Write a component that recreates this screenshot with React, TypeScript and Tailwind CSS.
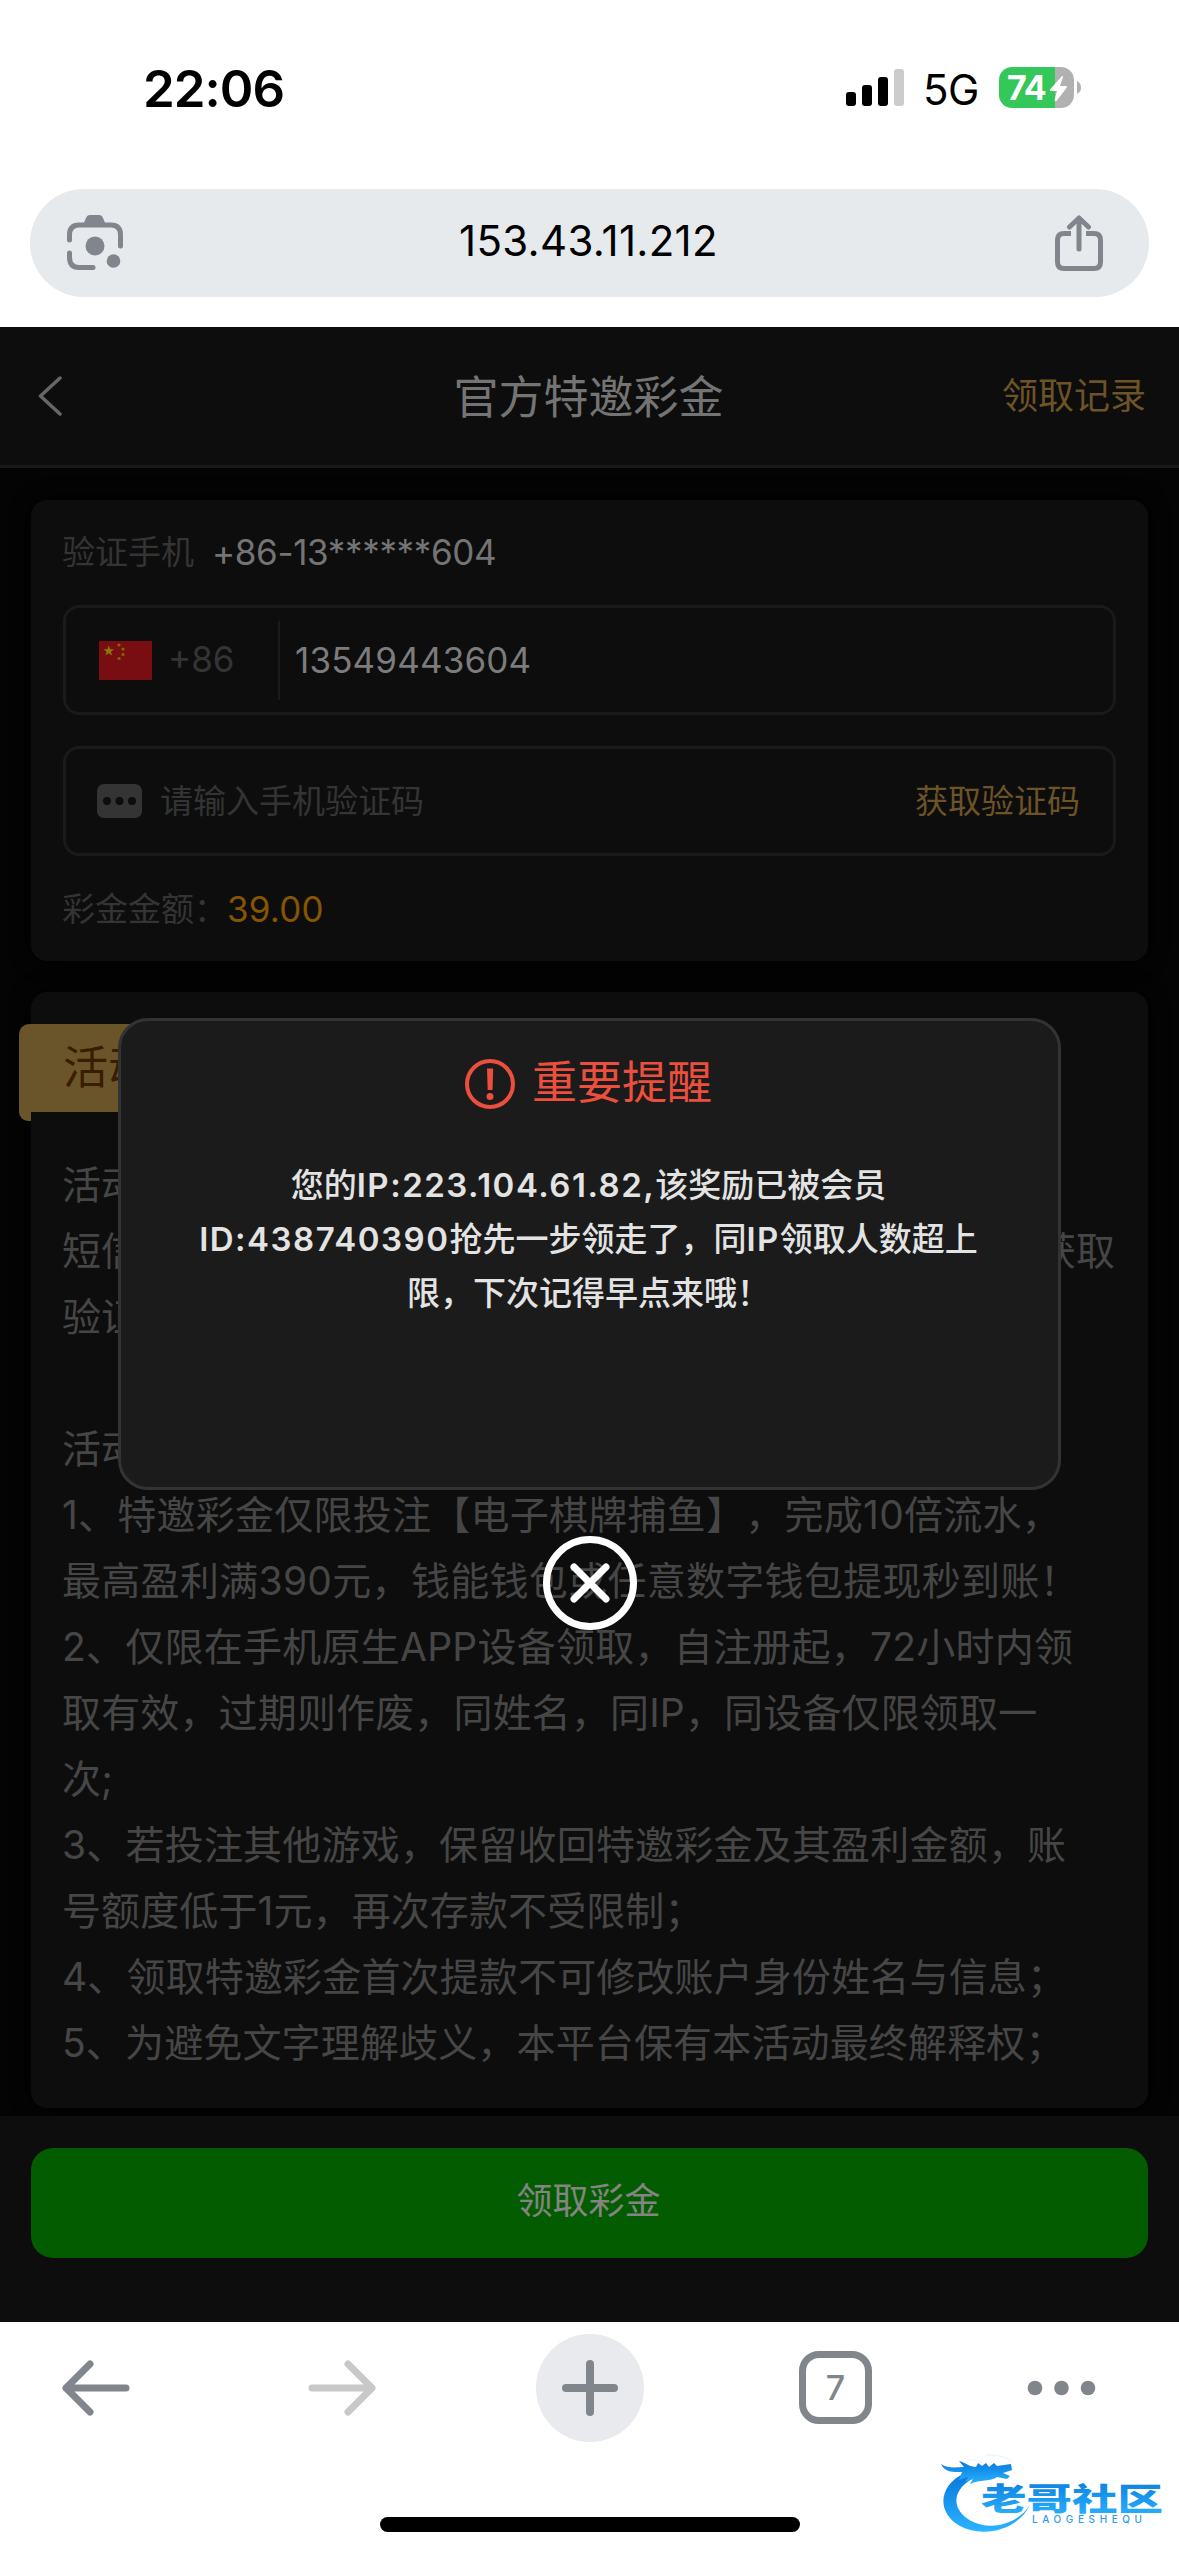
import type { ReactNode } from "react";

const rules = [
  { text: "1、特邀彩金仅限投注【电子棋牌捕鱼】，完成10倍流水，", tracking: "tracking-[0.25px]" },
  { text: "最高盈利满390元，钱能钱包或任意数字钱包提现秒到账！", tracking: "tracking-[0.3px]" },
  { text: "2、仅限在手机原生APP设备领取，自注册起，72小时内领", tracking: "tracking-[0.25px]" },
  { text: "取有效，过期则作废，同姓名，同IP，同设备仅限领取一", tracking: "tracking-[0.15px]" },
  { text: "次;", tracking: "tracking-[0.1px]" },
  { text: "3、若投注其他游戏，保留收回特邀彩金及其盈利金额，账", tracking: "tracking-[0.2px]" },
  { text: "号额度低于1元，再次存款不受限制；", tracking: "tracking-[0.1px]" },
  { text: "4、领取特邀彩金首次提款不可修改账户身份姓名与信息；", tracking: "tracking-[0.15px]" },
  { text: "5、为避免文字理解歧义，本平台保有本活动最终解释权；", tracking: "tracking-[0.15px]" },
];

export default function App() {
  return (
    <div className="relative flex h-[2556px] w-[1179px] flex-col overflow-hidden bg-white font-['Inter','Noto_Sans_CJK_SC',sans-serif] [text-spacing-trim:space-all]">
      <StatusBar />
      <AddressBar />
      <main className="flex h-[1995px] flex-col bg-[#040404]">
        <PageHeader />
        <VerifyCard />
        <RulesCard />
        <ClaimBar />
      </main>
      <BrowserToolbar />
      <ReminderDialog />
      <Watermark />
    </div>
  );
}

function StatusBar() {
  return (
    <div className="flex h-[189px] items-start justify-between pl-[143px] pr-[98px] text-black">
      <span className="mt-[59px] text-[51px] font-semibold leading-[60px] tracking-[-1px]">
        22:06
      </span>
      <div className="mt-[67px] flex items-start">
        <svg className="mt-[2px] h-[37px] w-[58px]" viewBox="0 0 58 37">
          <rect x="0" y="23" width="10" height="14" rx="3" />
          <rect x="16" y="16" width="10" height="21" rx="3" />
          <rect x="32" y="8" width="10" height="29" rx="3" />
          <rect x="48" y="0" width="10" height="37" rx="3" fill="#cccccc" />
        </svg>
        <span className="ml-[19px] mt-[-2px] w-[76px] text-[42px] leading-[50px] tracking-[-0.5px]">
          5G
        </span>
        <div className="relative flex h-[41px] w-[75px] items-center overflow-hidden rounded-[13px] bg-[linear-gradient(90deg,#34c759_56px,#b1b1b1_56px)]">
          <span className="pl-[8px] text-[34px] font-bold leading-[41px] tracking-[-1px] text-white">
            74
          </span>
          <svg
            className="absolute left-[51px] top-[9px] h-[26px] w-[17px]"
            viewBox="0 0 17 26"
            fill="#fff"
          >
            <path d="M12 0 L0 13.5 Q-.5 15 1 15 H7 L4.5 24 Q5 26 6.500 25 L16.500 12 Q17.500 10 16 10 H10 L13 1 Q13 0 12 0Z" />
          </svg>
        </div>
        <svg className="ml-[3px] mt-[14px] h-[13px] w-[4px]" viewBox="0 0 4 13">
          <path d="M0 0 Q4 2 4 6.500 T0 13Z" fill="#b1b1b1" />
        </svg>
      </div>
    </div>
  );
}

function AddressBar() {
  return (
    <div className="h-[138px] px-[30px]">
      <div className="flex h-[108px] items-center justify-between rounded-[54px] bg-[#e6eaed] pl-[37px] pr-[45px]">
        <svg
          className="h-[56px] w-[56px]"
          viewBox="0 0 56 56"
          fill="none"
          stroke="#80868b"
          strokeWidth="5"
        >
          <path d="M2.500 25 V20 Q2.500 10 12 10 H44 Q53.500 10 53.500 20 V31" strokeLinecap="round" />
          <path d="M2.500 38 V42 Q2.500 52.500 12 52.500 H26" strokeLinecap="round" />
          <path d="M16 10 L19 3 Q20 0 23 0 H32 Q35 0 36 3 L39 10Z" fill="#80868b" stroke="none" />
          <circle cx="28" cy="31" r="9.500" fill="#80868b" stroke="none" />
          <circle cx="46.500" cy="46" r="6.800" fill="#80868b" stroke="none" />
        </svg>
        <span className="mb-[5px] text-[42px] leading-[50px] tracking-[0.3px] text-black">
          153.43.11.212
        </span>
        <svg
          className="h-[56px] w-[50px]"
          viewBox="0 0 50 56"
          fill="none"
          stroke="#80868b"
          strokeWidth="5"
        >
          <path d="M17 18.500 H10 Q3.500 18.500 3.500 25 V47 Q3.500 53.500 10 53.500 H40 Q46.500 53.500 46.500 47 V25 Q46.500 18.500 40 18.500 H32" />
          <path d="M25 3 V34 M15.500 12 L25 3 L34.500 12" strokeLinecap="round" strokeLinejoin="round" />
        </svg>
      </div>
    </div>
  );
}

function PageHeader() {
  return (
    <header className="flex h-[141px] shrink-0 items-center justify-between border-b-[3px] border-[#1a1a1a] bg-[#0d0d0d] pl-[37px] pr-[33px]">
      <div className="w-[140px]">
        <svg className="h-[40px] w-[26px]" viewBox="0 0 26 40" fill="none" stroke="#666" strokeWidth="3.500">
          <path d="M23 2 L3.500 20 L23 38" strokeLinecap="round" strokeLinejoin="round" />
        </svg>
      </div>
      <h1 className="pt-[4px] text-[45px] leading-[60px] text-[#747474]">官方特邀彩金</h1>
      <span className="w-[146px] text-right text-[36px] leading-[50px] text-[#6c5426]">
        领取记录
      </span>
    </header>
  );
}

function Field({ children }: { children: ReactNode }) {
  return (
    <div className="flex h-[110px] items-center rounded-[16px] border-[3px] border-[#1a1a1a] px-[31px]">
      {children}
    </div>
  );
}

function VerifyCard() {
  return (
    <section className="mx-[31px] mt-[32px] h-[461px] shrink-0 rounded-[16px] bg-[#0d0d0d] px-[32px] shadow-[0_0_20px_#000]">
      <div className="-ml-px flex h-[105px] items-center pb-[2px] text-[33px] leading-[50px]">
        <span className="text-[#343434]">验证手机</span>
        <span className="ml-[18px] text-[35px] tracking-[-0.35px] text-[#747474]">+86-13******604</span>
      </div>
      <Field>
        <div className="ml-[2px]">
          <ChinaFlag />
        </div>
        <span className="ml-[16px] w-[110px] pb-[1px] text-[35px] text-[#343434]">+86</span>
        <span className="h-[79px] w-[2px] bg-[#1a1a1a]" />
        <span className="ml-[15px] text-[35px] tracking-[0.15px] text-[#7c7c7c]">13549443604</span>
      </Field>
      <div className="h-[31px]" />
      <Field>
        <svg className="h-[34px] w-[45px]" viewBox="0 0 45 34">
          <rect width="45" height="34" rx="7" fill="#343434" />
          <circle cx="10" cy="17" r="4" fill="#0d0d0d" />
          <circle cx="22.500" cy="17" r="4" fill="#0d0d0d" />
          <circle cx="35" cy="17" r="4" fill="#0d0d0d" />
        </svg>
        <span className="ml-[18px] pt-[2px] text-[33px] text-[#343434]">请输入手机验证码</span>
        <span className="ml-auto pr-[2px] pt-[2px] text-[33px] text-[#6c5426]">获取验证码</span>
      </Field>
      <div className="-ml-px flex h-[105px] items-center pt-[2px] text-[33px] text-[#343434]">
        彩金金额：
        <span className="text-[35px] tracking-[0.2px] text-[#855500]">39.00</span>
      </div>
    </section>
  );
}

function ChinaFlag() {
  return (
    <svg className="h-[39px] w-[53px]" viewBox="0 0 53 39">
      <rect width="53" height="39" fill="#780e12" />
      <path
        d="M9.800 4.500 L11.100 8.300 H15.200 L11.900 10.700 L13.200 14.500 L9.800 12.200 L6.400 14.500 L7.700 10.700 L4.400 8.300 H8.500Z"
        fill="#8a7c00"
      />
      <g fill="#8a6500">
        <circle cx="20" cy="4" r="1.600" />
        <circle cx="24" cy="8" r="1.600" />
        <circle cx="24" cy="13.500" r="1.600" />
        <circle cx="20" cy="17.500" r="1.600" />
      </g>
    </svg>
  );
}

function RulesCard() {
  return (
    <section className="mx-[31px] mt-[31px] h-[1116px] shrink-0 rounded-[16px] bg-[#0d0d0d] pt-[32px] shadow-[0_0_20px_#000]">
      <div className="-ml-[12px] w-[260px]">
        <h2 className="h-[88px] rounded-tl-[10px] bg-[#695529] pl-[44px] text-[45px] leading-[88px] text-[#3a1d00]">
          活动内容
        </h2>
        <div className="h-[9px] w-[12px] rounded-bl-[10px] bg-[#695529]" />
      </div>
      <div className="mt-[31px] whitespace-nowrap pl-[31px] pr-[33px] text-[39px] leading-[66px] text-[#464646]">
        <p>活动</p>
        <p className="flex justify-between">
          <span>短信</span>
          <span>获取</span>
        </p>
        <p>验证</p>
        <p className="mt-[66px]">活动</p>
        {rules.map((rule) => (
          <p key={rule.text} className={rule.tracking}>
            {rule.text}
          </p>
        ))}
      </div>
    </section>
  );
}

function ClaimBar() {
  return (
    <div className="mt-[8px] flex-1 bg-[#0d0d0d] px-[31px] pt-[32px]">
      <button
        type="button"
        className="h-[110px] w-full rounded-[22px] bg-[#045c00] pb-[4px] pr-[2px] text-[36px] text-[#848484]"
      >
        领取彩金
      </button>
    </div>
  );
}

function BrowserToolbar() {
  return (
    <nav className="flex h-[234px] flex-col items-center bg-white">
      <div className="flex h-[131px] w-full items-center pl-[61px]">
        <svg className="h-[58px] w-[69px]" viewBox="0 0 69 58" fill="none" stroke="#80868b" strokeWidth="7">
          <path d="M65 29 H5 M29 5 L5 29 L29 53" strokeLinecap="round" strokeLinejoin="round" />
        </svg>
        <svg className="ml-[178px] h-[58px] w-[69px]" viewBox="0 0 69 58" fill="none" stroke="#c8c8c8" strokeWidth="7">
          <path d="M4 29 H64 M40 5 L64 29 L40 53" strokeLinecap="round" strokeLinejoin="round" />
        </svg>
        <div className="ml-[159px] flex h-[108px] w-[108px] items-center justify-center rounded-full bg-[#e8eaed]">
          <svg className="h-[56px] w-[56px]" viewBox="0 0 56 56" stroke="#80868b" strokeWidth="8">
            <path d="M28 4 V52 M4 28 H52" strokeLinecap="round" />
          </svg>
        </div>
        <span className="ml-[155px] flex h-[73px] w-[73px] items-center justify-center rounded-[20px] border-[7px] border-[#80868b] text-[34px] font-medium leading-none text-[#80868b]">
          7
        </span>
        <svg className="ml-[155px] h-[16px] w-[69px]" viewBox="0 0 69 16" fill="#80868b">
          <circle cx="8" cy="8" r="7.300" />
          <circle cx="34.500" cy="8" r="7.300" />
          <circle cx="61" cy="8" r="7.300" />
        </svg>
      </div>
      <div className="mt-[64px] h-[15px] w-[420px] rounded-full bg-black" />
    </nav>
  );
}

function ReminderDialog() {
  return (
    <div className="absolute left-[118px] top-[1018px] flex w-[943px] flex-col items-center">
      <div className="h-[472px] w-full rounded-[30px] border-[3px] border-[#333] bg-[#1b1b1b] pt-[31px]">
        <div className="flex h-[64px] items-center justify-center pr-[2px]">
          <svg className="h-[50px] w-[50px]" viewBox="0 0 50 50">
            <circle cx="25" cy="25" r="23" fill="none" stroke="#ec4f3e" strokeWidth="4" />
            <path d="M22 9.500 H28.200 L27.500 31 H22.700Z" fill="#ec4f3e" />
            <circle cx="25" cy="37.500" r="3.500" fill="#ec4f3e" />
          </svg>
          <h3 className="mb-[2px] ml-[17px] text-[45px] leading-[60px] text-[#ec4f3e]">重要提醒</h3>
        </div>
        <div className="mt-[42px] whitespace-nowrap pr-[2px] text-center text-[33px] font-medium leading-[54px] text-[#e3e3e3]">
          <p>
            您的<Latin>IP:223.104.61.82,</Latin>该奖励已被会员
          </p>
          <p>
            <Latin>ID:438740390</Latin>抢先一步领走了，同<Latin>IP</Latin>领取人数超上
          </p>
          <p>限，下次记得早点来哦！</p>
        </div>
      </div>
      <svg className="mt-[46px] h-[94px] w-[94px]" viewBox="0 0 94 94" fill="none" stroke="#fff" strokeWidth="7">
        <circle cx="47" cy="47" r="43.500" />
        <path d="M31 31 L63 63 M63 31 L31 63" strokeLinecap="round" />
      </svg>
    </div>
  );
}

function Latin({ children }: { children: ReactNode }) {
  return <span className="font-semibold tracking-[1.5px]">{children}</span>;
}

function Watermark() {
  return (
    <svg
      className="absolute bottom-[20px] right-[12px] h-[84px] w-[230px]"
      viewBox="0 0 230 84"
    >
      <defs>
        <linearGradient id="brand" x1="0" y1="0" x2="0" y2="1">
          <stop offset="0" stopColor="#0878dc" />
          <stop offset="1" stopColor="#2ab4ff" />
        </linearGradient>
      </defs>
      <g fill="url(#brand)">
        <path d="M26 22 C3 33 -2 60 23 74 C45 86 80 79 93 53 C80 73 53 79 34 69 C12 57 15 34 42 24Z" />
        <path d="M4 12 C11 17 20 15 27 15 L22 9 C29 11 33 15 39 15 L41 11 L45 14 L49 11 L52 15 L57 11 L60 14 L74 12 L75 18 L66 21 L73 24 L70 27 L60 25 C54 30 43 27 33 32 L36 27 L28 30 L31 25 L22 28 L25 20 C17 20 8 21 4 12Z" />
      </g>
      <path d="M31 8 Q39 7 45 11 M49 3 Q65 2 75 10" fill="none" stroke="#e5f2fc" />
      <text
        x="44"
        y="58"
        textLength="182"
        lengthAdjust="spacingAndGlyphs"
        fill="url(#brand)"
        className="font-['Noto_Sans_CJK_SC',sans-serif] text-[31px] font-black"
      >
        老哥社区
      </text>
      <text
        x="95"
        y="71"
        textLength="110"
        fill="#2f9aea"
        className="font-['Inter',sans-serif] text-[10px] font-medium"
      >
        LAOGESHEQU
      </text>
    </svg>
  );
}
